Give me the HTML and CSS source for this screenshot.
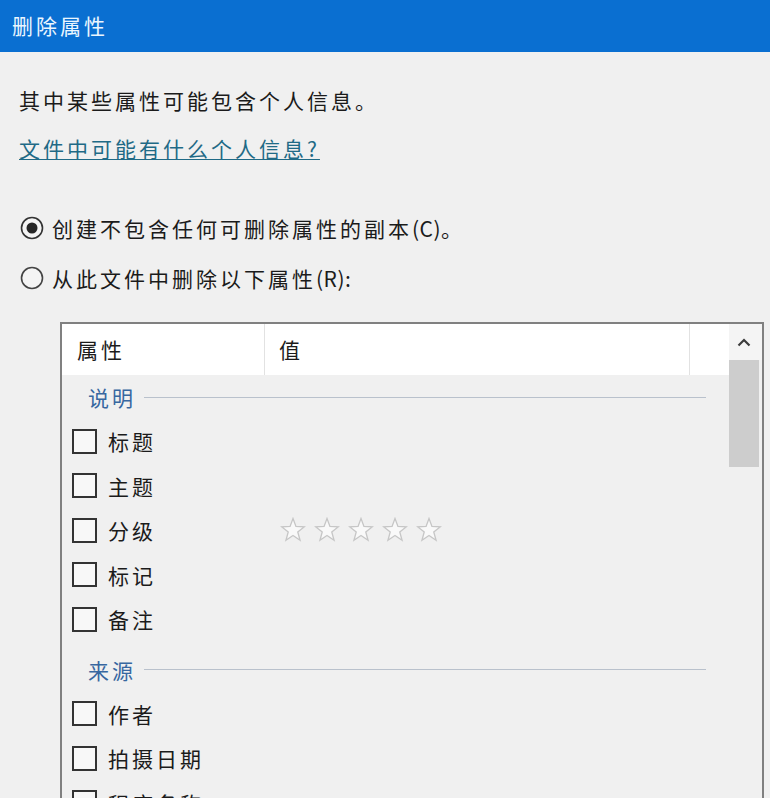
FILE: index.html
```html
<!DOCTYPE html>
<html lang="zh-CN">
<head>
<meta charset="utf-8">
<title>删除属性</title>
<link rel="stylesheet" href="styles.css">
</head>
<body>
<div class="dialog">
  <div class="titlebar">删除属性</div>
  <div class="content">
    <p class="intro">其中某些属性可能包含个人信息。</p>
    <a class="link" href="#">文件中可能有什么个人信息?</a>
    <div class="radio radio-first">
      <svg class="radio-icon" width="24" height="24" viewBox="0 0 24 24"><circle cx="12" cy="12" r="10.5" fill="#f4f4f4" stroke="#333" stroke-width="1.6"/><circle cx="12" cy="12" r="5.5" fill="#262626"/></svg>
      <span>创建不包含任何可删除属性的副本<span class="latin">(C)</span>。</span>
    </div>
    <div class="radio">
      <svg class="radio-icon" width="24" height="24" viewBox="0 0 24 24"><circle cx="12" cy="12" r="10.5" fill="#f4f4f4" stroke="#444" stroke-width="1.6"/></svg>
      <span>从此文件中删除以下属性<span class="latin">(R):</span></span>
    </div>
    <div class="listbox">
      <div class="listmain">
        <div class="lheader">
          <div class="hcol hcol1">属性</div>
          <div class="hcol hcol2">值</div>
          <div class="hcol hcol3"></div>
        </div>
        <div class="group group-first"><span class="glabel">说明</span><span class="grule"></span></div>
        <div class="row"><div class="cell1"><span class="cb"></span><span>标题</span></div></div>
        <div class="row"><div class="cell1"><span class="cb"></span><span>主题</span></div></div>
        <div class="row"><div class="cell1"><span class="cb"></span><span>分级</span></div>
          <div class="stars">
            <svg width="26" height="26" viewBox="0 0 26 26"><polygon points="13,1.5 15.94,9.45 24.41,9.79 17.76,15.05 20.05,23.21 13,18.5 5.95,23.21 8.24,15.05 1.59,9.79 10.06,9.45" fill="#f9f9f9" stroke="#c6c6c6" stroke-width="1.3"/></svg>
            <svg width="26" height="26" viewBox="0 0 26 26"><polygon points="13,1.5 15.94,9.45 24.41,9.79 17.76,15.05 20.05,23.21 13,18.5 5.95,23.21 8.24,15.05 1.59,9.79 10.06,9.45" fill="#f9f9f9" stroke="#c6c6c6" stroke-width="1.3"/></svg>
            <svg width="26" height="26" viewBox="0 0 26 26"><polygon points="13,1.5 15.94,9.45 24.41,9.79 17.76,15.05 20.05,23.21 13,18.5 5.95,23.21 8.24,15.05 1.59,9.79 10.06,9.45" fill="#f9f9f9" stroke="#c6c6c6" stroke-width="1.3"/></svg>
            <svg width="26" height="26" viewBox="0 0 26 26"><polygon points="13,1.5 15.94,9.45 24.41,9.79 17.76,15.05 20.05,23.21 13,18.5 5.95,23.21 8.24,15.05 1.59,9.79 10.06,9.45" fill="#f9f9f9" stroke="#c6c6c6" stroke-width="1.3"/></svg>
            <svg width="26" height="26" viewBox="0 0 26 26"><polygon points="13,1.5 15.94,9.45 24.41,9.79 17.76,15.05 20.05,23.21 13,18.5 5.95,23.21 8.24,15.05 1.59,9.79 10.06,9.45" fill="#f9f9f9" stroke="#c6c6c6" stroke-width="1.3"/></svg>
          </div>
        </div>
        <div class="row"><div class="cell1"><span class="cb"></span><span>标记</span></div></div>
        <div class="row"><div class="cell1"><span class="cb"></span><span>备注</span></div></div>
        <div class="group"><span class="glabel">来源</span><span class="grule"></span></div>
        <div class="row"><div class="cell1"><span class="cb"></span><span>作者</span></div></div>
        <div class="row"><div class="cell1"><span class="cb"></span><span>拍摄日期</span></div></div>
        <div class="row"><div class="cell1"><span class="cb"></span><span>程序名称</span></div></div>
      </div>
      <div class="scrollbar">
        <div class="sarrow"><svg width="14" height="9" viewBox="0 0 14 9"><path d="M1.5 7.5 L7 2 L12.5 7.5" fill="none" stroke="#3c3c3c" stroke-width="2.2"/></svg></div>
        <div class="sthumb"></div>
      </div>
    </div>
  </div>
</div>
</body>
</html>
```

FILE: styles.css
```css
html, body {
  margin: 0;
  padding: 0;
}
body {
  width: 770px;
  height: 798px;
  overflow: hidden;
  background: #f0f0f0;
  font-family: "Noto Sans CJK SC", "Microsoft YaHei", "Noto Sans", sans-serif;
  font-size: 21px;
  letter-spacing: 3px;
  color: #1b1b1b;
}
.latin {
  letter-spacing: 0.5px;
}
.dialog {
  display: flex;
  flex-direction: column;
}
.titlebar {
  height: 52px;
  line-height: 50px;
  padding-left: 12px;
  background: #0a6fd1;
  color: #eaf6ff;
}
.content {
  padding-left: 19px;
  display: flex;
  flex-direction: column;
  align-items: flex-start;
}
.intro {
  margin: 33px 0 0 0;
  line-height: 30px;
}
.link {
  display: block;
  margin-top: 18px;
  line-height: 30px;
  color: #1f6a86;
  text-decoration: underline;
  text-underline-offset: 2px;
  text-decoration-thickness: 1px;
}
.radio {
  display: flex;
  align-items: center;
  gap: 8px;
  height: 30px;
  margin-top: 20px;
}
.radio-first {
  margin-top: 50px;
}
.radio-icon {
  margin-left: 1px;
  flex: none;
}
.listbox {
  margin-top: 29px;
  margin-left: 41px;
  width: 700px;
  height: 520px;
  border: 2px solid #808080;
  display: flex;
  background: #f0f0f0;
}
.listmain {
  flex: 1;
  display: flex;
  flex-direction: column;
}
.lheader {
  height: 51px;
  background: #fff;
  display: flex;
}
.hcol {
  line-height: 51px;
  padding-left: 14px;
  box-sizing: border-box;
}
.hcol1 {
  width: 203px;
  padding-left: 15px;
  border-right: 1px solid #e2e2e2;
}
.hcol2 {
  width: 425px;
  border-right: 1px solid #e2e2e2;
}
.hcol3 {
  flex: 1;
}
.group {
  height: 44px;
  display: flex;
  align-items: center;
  padding-left: 26px;
  padding-right: 23px;
  margin-top: 6px;
}
.group-first {
  margin-top: 0;
}
.glabel {
  color: #3767a0;
}
.grule {
  flex: 1;
  height: 1px;
  margin-left: 8px;
  background: #b9c1cc;
}
.row {
  height: 44.5px;
  display: flex;
  align-items: center;
}
.cell1 {
  width: 203px;
  box-sizing: border-box;
  padding-left: 10px;
  display: flex;
  align-items: center;
  gap: 11px;
}
.cb {
  width: 21px;
  height: 21px;
  border: 2px solid #333;
  background: #f8f8f8;
  flex: none;
}
.stars {
  padding-left: 15px;
  display: flex;
  gap: 8px;
}
.stars svg {
  display: block;
}
.scrollbar {
  width: 33px;
  display: flex;
  flex-direction: column;
  background: #f0f0f0;
}
.sarrow {
  height: 36px;
  display: flex;
  align-items: center;
  justify-content: center;
  background: #f4f4f4;
}
.sarrow svg {
  display: block;
  margin-right: 3px;
}
.sthumb {
  height: 107px;
  margin-right: 3px;
  background: #cdcdcd;
}
```
